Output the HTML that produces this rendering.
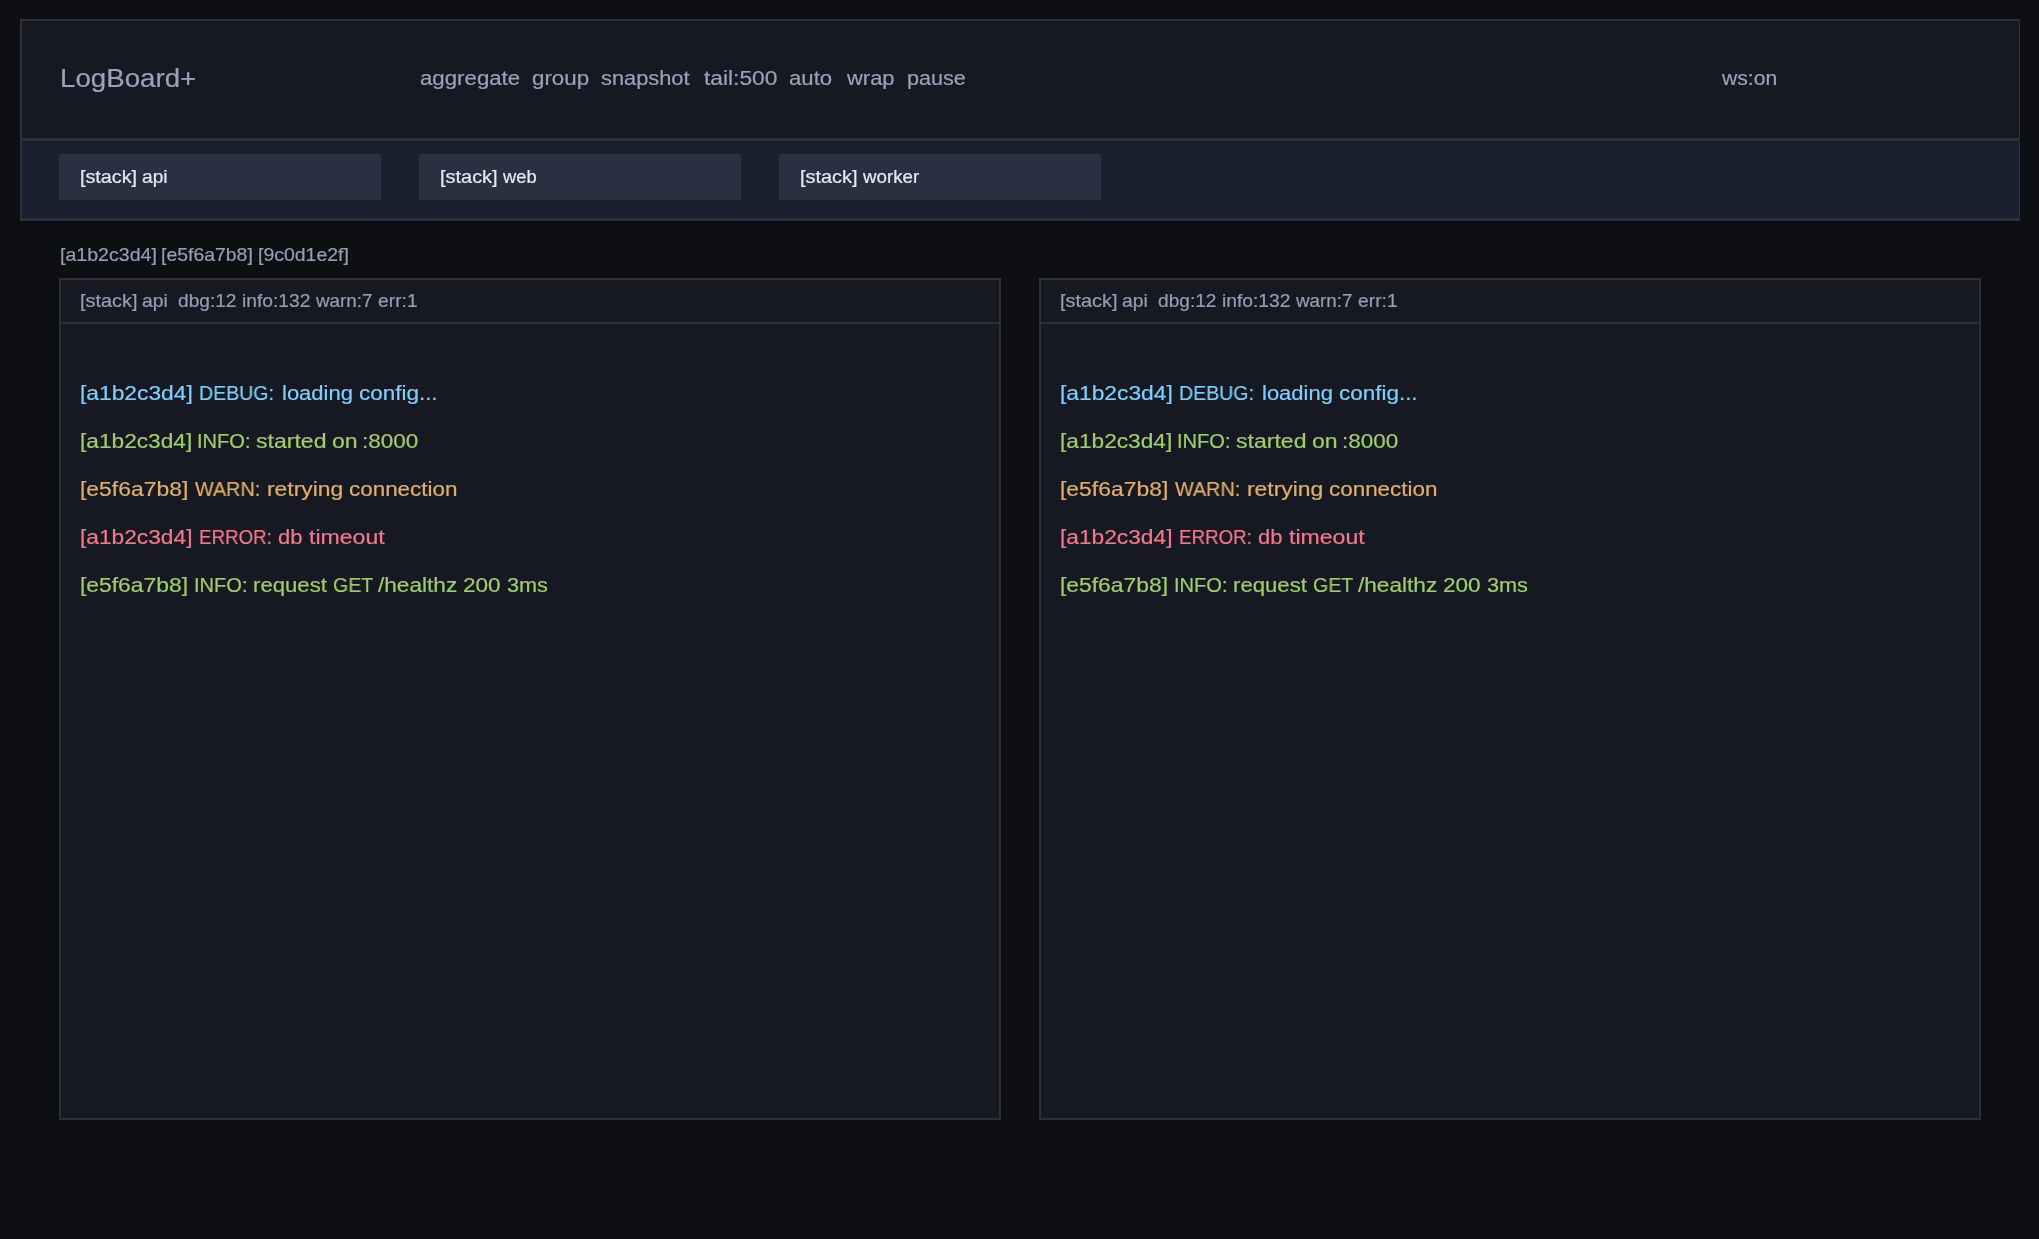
<!DOCTYPE html>
<html><head><meta charset="utf-8"><title>LogBoard+</title>
<style>
html,body{margin:0;padding:0;width:2039px;height:1239px;overflow:hidden;background:#0e0f13;}
.b{position:absolute;}
.t{position:absolute;white-space:pre;line-height:0;font-family:"Liberation Sans",sans-serif;transform-origin:0 0;will-change:transform;-webkit-text-stroke:0.2px currentColor;}
</style></head><body>
<div class='b' style='left:20px;top:19px;width:2000px;height:202px;background:#2c303b'></div>
<div class='b' style='left:22px;top:21px;width:1997px;height:117px;background:#161921'></div>
<div class='b' style='left:22px;top:141px;width:1997px;height:77px;background:#1b2030'></div>
<div class='b' style='left:59px;top:154px;width:322px;height:46px;background:#2d313b'></div>
<div class='b' style='left:61px;top:156px;width:318px;height:42px;background:#2a2f42'></div>
<div class='b' style='left:419px;top:154px;width:322px;height:46px;background:#2d313b'></div>
<div class='b' style='left:421px;top:156px;width:318px;height:42px;background:#2a2f42'></div>
<div class='b' style='left:779px;top:154px;width:322px;height:46px;background:#2d313b'></div>
<div class='b' style='left:781px;top:156px;width:318px;height:42px;background:#2a2f42'></div>
<div class='b' style='left:59px;top:278px;width:942px;height:842px;background:#2c303b'></div>
<div class='b' style='left:61px;top:280px;width:938px;height:42px;background:#161921'></div>
<div class='b' style='left:61px;top:324px;width:938px;height:794px;background:#161921'></div>
<div class='b' style='left:1039px;top:278px;width:942px;height:842px;background:#2c303b'></div>
<div class='b' style='left:1041px;top:280px;width:938px;height:42px;background:#161921'></div>
<div class='b' style='left:1041px;top:324px;width:938px;height:794px;background:#161921'></div>
<div class='t' style='left:59.80px;top:78.10px;font-size:25.2px;color:#98a2b8;transform:scaleX(1.0992)'>LogBoard+</div>
<div class='t' style='left:419.89px;top:77.80px;font-size:20.1px;color:#98a2b8;transform:scaleX(1.1067)'>aggregate</div>
<div class='t' style='left:532.39px;top:77.80px;font-size:20.1px;color:#98a2b8;transform:scaleX(1.1100)'>group</div>
<div class='t' style='left:601.21px;top:77.80px;font-size:20.1px;color:#98a2b8;transform:scaleX(1.0852)'>snapshot</div>
<div class='t' style='left:703.50px;top:77.80px;font-size:20.1px;color:#98a2b8;transform:scaleX(1.1328)'>tail:500</div>
<div class='t' style='left:789.20px;top:77.80px;font-size:20.1px;color:#98a2b8;transform:scaleX(1.1026)'>auto</div>
<div class='t' style='left:846.50px;top:77.80px;font-size:20.1px;color:#98a2b8;transform:scaleX(1.0907)'>wrap</div>
<div class='t' style='left:906.52px;top:77.80px;font-size:20.1px;color:#98a2b8;transform:scaleX(1.0755)'>pause</div>
<div class='t' style='left:1721.80px;top:77.90px;font-size:20.1px;color:#98a2b8;transform:scaleX(1.0510)'>ws:on</div>
<div class='t' style='left:79.78px;top:177.00px;font-size:17.7px;color:#e6e9f2;transform:scaleX(1.1172)'>[stack]</div>
<div class='t' style='left:141.53px;top:177.00px;font-size:17.7px;color:#e6e9f2;transform:scaleX(1.0858)'>api</div>
<div class='t' style='left:439.67px;top:177.00px;font-size:17.7px;color:#e6e9f2;transform:scaleX(1.1272)'>[stack]</div>
<div class='t' style='left:503.06px;top:177.00px;font-size:17.7px;color:#e6e9f2;transform:scaleX(1.0356)'>web</div>
<div class='t' style='left:799.78px;top:177.00px;font-size:17.7px;color:#e6e9f2;transform:scaleX(1.1244)'>[stack]</div>
<div class='t' style='left:863.01px;top:177.00px;font-size:17.7px;color:#e6e9f2;transform:scaleX(1.0584)'>worker</div>
<div class='t' style='left:59.79px;top:255.00px;font-size:17.7px;color:#949eb4;transform:scaleX(1.1067)'>[a1b2c3d4]</div>
<div class='t' style='left:160.87px;top:255.00px;font-size:17.7px;color:#949eb4;transform:scaleX(1.0983)'>[e5f6a7b8]</div>
<div class='t' style='left:257.94px;top:255.00px;font-size:17.7px;color:#949eb4;transform:scaleX(1.0995)'>[9c0d1e2f]</div>
<div class='t' style='left:79.58px;top:300.80px;font-size:17.7px;color:#949eb4;transform:scaleX(1.1238)'>[stack]</div>
<div class='t' style='left:141.68px;top:300.80px;font-size:17.7px;color:#949eb4;transform:scaleX(1.0922)'>api</div>
<div class='t' style='left:177.72px;top:300.80px;font-size:17.7px;color:#949eb4;transform:scaleX(1.0815)'>dbg:12</div>
<div class='t' style='left:241.98px;top:300.80px;font-size:17.7px;color:#949eb4;transform:scaleX(1.0865)'>info:132</div>
<div class='t' style='left:316.38px;top:300.80px;font-size:17.7px;color:#949eb4;transform:scaleX(1.0622)'>warn:7</div>
<div class='t' style='left:377.55px;top:300.80px;font-size:17.7px;color:#949eb4;transform:scaleX(1.0903)'>err:1</div>
<div class='t' style='left:79.87px;top:392.80px;font-size:20.1px;color:#7dcfff;transform:scaleX(1.1334)'>[a1b2c3d4]</div>
<div class='t' style='left:198.96px;top:392.80px;font-size:20.1px;color:#7dcfff;transform:scaleX(0.9728)'>DEBUG:</div>
<div class='t' style='left:281.79px;top:392.80px;font-size:20.1px;color:#7dcfff;transform:scaleX(1.0946)'>loading</div>
<div class='t' style='left:358.73px;top:392.80px;font-size:20.1px;color:#7dcfff;transform:scaleX(1.1170)'>config...</div>
<div class='t' style='left:79.87px;top:440.80px;font-size:20.1px;color:#9ece6a;transform:scaleX(1.1283)'>[a1b2c3d4]</div>
<div class='t' style='left:197.41px;top:440.80px;font-size:20.1px;color:#9ece6a;transform:scaleX(0.9950)'>INFO:</div>
<div class='t' style='left:255.97px;top:440.80px;font-size:20.1px;color:#9ece6a;transform:scaleX(1.1468)'>started</div>
<div class='t' style='left:331.59px;top:440.80px;font-size:20.1px;color:#9ece6a;transform:scaleX(1.1442)'>on</div>
<div class='t' style='left:362.33px;top:440.80px;font-size:20.1px;color:#9ece6a;transform:scaleX(1.1194)'>:8000</div>
<div class='t' style='left:79.86px;top:488.80px;font-size:20.1px;color:#e0af68;transform:scaleX(1.1398)'>[e5f6a7b8]</div>
<div class='t' style='left:195.00px;top:488.80px;font-size:20.1px;color:#e0af68;transform:scaleX(0.9846)'>WARN:</div>
<div class='t' style='left:266.86px;top:488.80px;font-size:20.1px;color:#e0af68;transform:scaleX(1.1385)'>retrying</div>
<div class='t' style='left:348.88px;top:488.80px;font-size:20.1px;color:#e0af68;transform:scaleX(1.1158)'>connection</div>
<div class='t' style='left:79.87px;top:536.80px;font-size:20.1px;color:#f7768e;transform:scaleX(1.1310)'>[a1b2c3d4]</div>
<div class='t' style='left:198.76px;top:536.80px;font-size:20.1px;color:#f7768e;transform:scaleX(0.9318)'>ERROR:</div>
<div class='t' style='left:278.39px;top:536.80px;font-size:20.1px;color:#f7768e;transform:scaleX(1.0924)'>db</div>
<div class='t' style='left:309.40px;top:536.80px;font-size:20.1px;color:#f7768e;transform:scaleX(1.1485)'>timeout</div>
<div class='t' style='left:79.86px;top:584.80px;font-size:20.1px;color:#9ece6a;transform:scaleX(1.1369)'>[e5f6a7b8]</div>
<div class='t' style='left:193.71px;top:584.80px;font-size:20.1px;color:#9ece6a;transform:scaleX(0.9974)'>INFO:</div>
<div class='t' style='left:253.45px;top:584.80px;font-size:20.1px;color:#9ece6a;transform:scaleX(1.1032)'>request</div>
<div class='t' style='left:333.38px;top:584.80px;font-size:20.1px;color:#9ece6a;transform:scaleX(0.9725)'>GET</div>
<div class='t' style='left:378.24px;top:584.80px;font-size:20.1px;color:#9ece6a;transform:scaleX(1.1257)'>/healthz</div>
<div class='t' style='left:462.89px;top:584.80px;font-size:20.1px;color:#9ece6a;transform:scaleX(1.1221)'>200</div>
<div class='t' style='left:506.82px;top:584.80px;font-size:20.1px;color:#9ece6a;transform:scaleX(1.0783)'>3ms</div>
<div class='t' style='left:1059.58px;top:300.80px;font-size:17.7px;color:#949eb4;transform:scaleX(1.1238)'>[stack]</div>
<div class='t' style='left:1121.68px;top:300.80px;font-size:17.7px;color:#949eb4;transform:scaleX(1.0922)'>api</div>
<div class='t' style='left:1157.72px;top:300.80px;font-size:17.7px;color:#949eb4;transform:scaleX(1.0815)'>dbg:12</div>
<div class='t' style='left:1221.98px;top:300.80px;font-size:17.7px;color:#949eb4;transform:scaleX(1.0865)'>info:132</div>
<div class='t' style='left:1296.38px;top:300.80px;font-size:17.7px;color:#949eb4;transform:scaleX(1.0622)'>warn:7</div>
<div class='t' style='left:1357.55px;top:300.80px;font-size:17.7px;color:#949eb4;transform:scaleX(1.0903)'>err:1</div>
<div class='t' style='left:1059.87px;top:392.80px;font-size:20.1px;color:#7dcfff;transform:scaleX(1.1334)'>[a1b2c3d4]</div>
<div class='t' style='left:1178.96px;top:392.80px;font-size:20.1px;color:#7dcfff;transform:scaleX(0.9728)'>DEBUG:</div>
<div class='t' style='left:1261.79px;top:392.80px;font-size:20.1px;color:#7dcfff;transform:scaleX(1.0946)'>loading</div>
<div class='t' style='left:1338.73px;top:392.80px;font-size:20.1px;color:#7dcfff;transform:scaleX(1.1170)'>config...</div>
<div class='t' style='left:1059.87px;top:440.80px;font-size:20.1px;color:#9ece6a;transform:scaleX(1.1283)'>[a1b2c3d4]</div>
<div class='t' style='left:1177.41px;top:440.80px;font-size:20.1px;color:#9ece6a;transform:scaleX(0.9950)'>INFO:</div>
<div class='t' style='left:1235.97px;top:440.80px;font-size:20.1px;color:#9ece6a;transform:scaleX(1.1468)'>started</div>
<div class='t' style='left:1311.59px;top:440.80px;font-size:20.1px;color:#9ece6a;transform:scaleX(1.1442)'>on</div>
<div class='t' style='left:1342.33px;top:440.80px;font-size:20.1px;color:#9ece6a;transform:scaleX(1.1194)'>:8000</div>
<div class='t' style='left:1059.86px;top:488.80px;font-size:20.1px;color:#e0af68;transform:scaleX(1.1398)'>[e5f6a7b8]</div>
<div class='t' style='left:1175.00px;top:488.80px;font-size:20.1px;color:#e0af68;transform:scaleX(0.9846)'>WARN:</div>
<div class='t' style='left:1246.86px;top:488.80px;font-size:20.1px;color:#e0af68;transform:scaleX(1.1385)'>retrying</div>
<div class='t' style='left:1328.88px;top:488.80px;font-size:20.1px;color:#e0af68;transform:scaleX(1.1158)'>connection</div>
<div class='t' style='left:1059.87px;top:536.80px;font-size:20.1px;color:#f7768e;transform:scaleX(1.1310)'>[a1b2c3d4]</div>
<div class='t' style='left:1178.76px;top:536.80px;font-size:20.1px;color:#f7768e;transform:scaleX(0.9318)'>ERROR:</div>
<div class='t' style='left:1258.39px;top:536.80px;font-size:20.1px;color:#f7768e;transform:scaleX(1.0924)'>db</div>
<div class='t' style='left:1289.40px;top:536.80px;font-size:20.1px;color:#f7768e;transform:scaleX(1.1485)'>timeout</div>
<div class='t' style='left:1059.86px;top:584.80px;font-size:20.1px;color:#9ece6a;transform:scaleX(1.1369)'>[e5f6a7b8]</div>
<div class='t' style='left:1173.71px;top:584.80px;font-size:20.1px;color:#9ece6a;transform:scaleX(0.9974)'>INFO:</div>
<div class='t' style='left:1233.45px;top:584.80px;font-size:20.1px;color:#9ece6a;transform:scaleX(1.1032)'>request</div>
<div class='t' style='left:1313.38px;top:584.80px;font-size:20.1px;color:#9ece6a;transform:scaleX(0.9725)'>GET</div>
<div class='t' style='left:1358.24px;top:584.80px;font-size:20.1px;color:#9ece6a;transform:scaleX(1.1257)'>/healthz</div>
<div class='t' style='left:1442.89px;top:584.80px;font-size:20.1px;color:#9ece6a;transform:scaleX(1.1221)'>200</div>
<div class='t' style='left:1486.82px;top:584.80px;font-size:20.1px;color:#9ece6a;transform:scaleX(1.0783)'>3ms</div>
</body></html>
